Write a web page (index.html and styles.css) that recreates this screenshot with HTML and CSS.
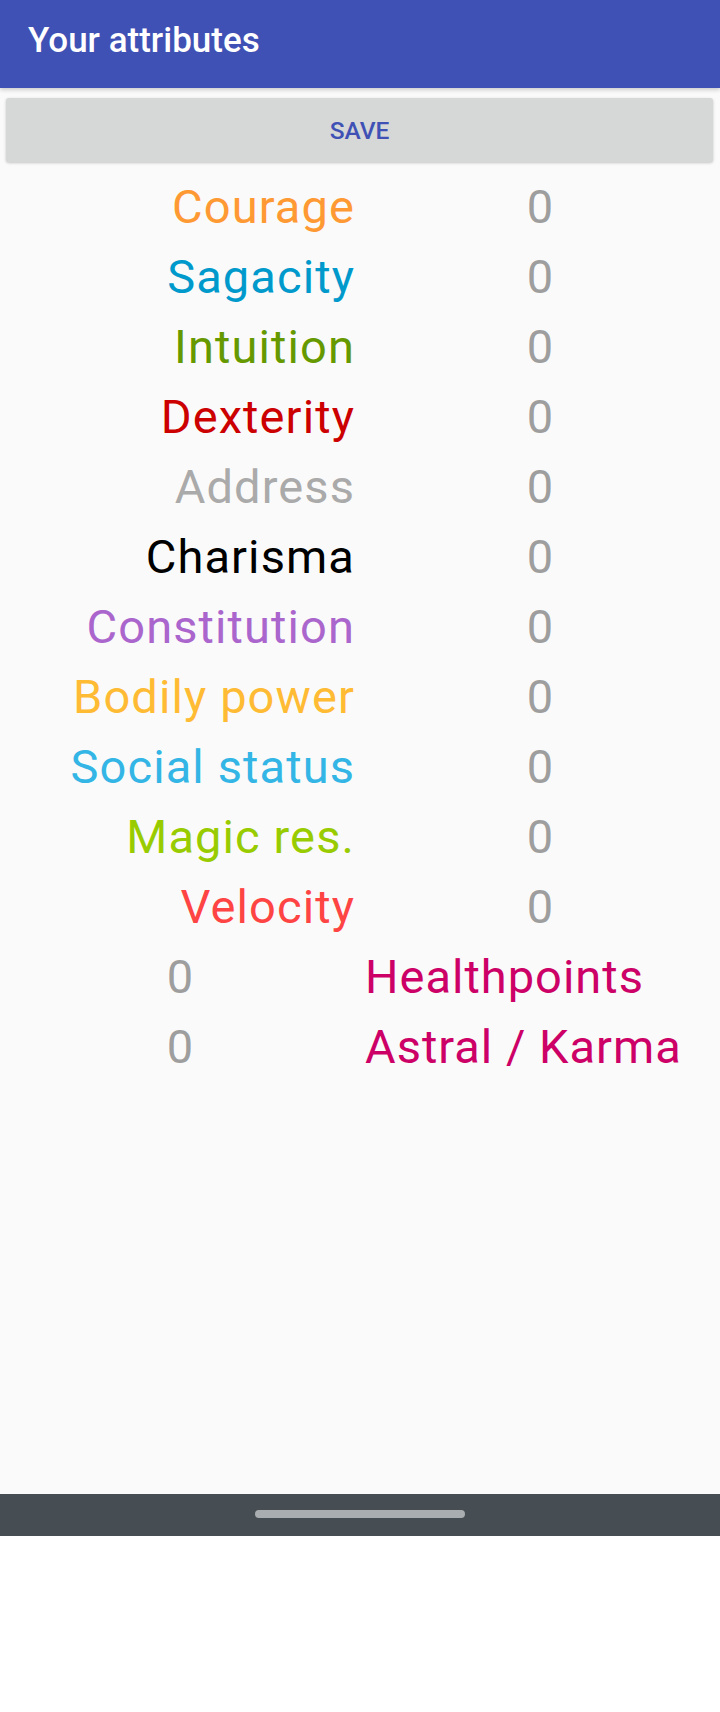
FILE: index.html
```html
<!DOCTYPE html>
<html>
<head>
<meta charset="utf-8">
<link rel="stylesheet" href="styles.css">
</head>
<body>
<div class="screen">
  <header class="appbar"><span class="title">Your attributes</span></header>
  <main class="content">
    <button class="save">SAVE</button>
    <div class="grid">
      <div class="label c-courage">Courage</div><div class="num">0</div>
      <div class="label c-sagacity">Sagacity</div><div class="num">0</div>
      <div class="label c-intuition">Intuition</div><div class="num">0</div>
      <div class="label c-dexterity">Dexterity</div><div class="num">0</div>
      <div class="label c-address">Address</div><div class="num">0</div>
      <div class="label c-charisma">Charisma</div><div class="num">0</div>
      <div class="label c-constitution">Constitution</div><div class="num">0</div>
      <div class="label c-bodily">Bodily power</div><div class="num">0</div>
      <div class="label c-social">Social status</div><div class="num">0</div>
      <div class="label c-magic">Magic res.</div><div class="num">0</div>
      <div class="label c-velocity">Velocity</div><div class="num">0</div>
      <div class="num">0</div><div class="label-r c-points">Healthpoints</div>
      <div class="num">0</div><div class="label-r c-points">Astral / Karma</div>
    </div>
  </main>
  <footer class="navbar"><span class="pill"></span></footer>
  <div class="below"></div>
</div>
</body>
</html>
```
FILE: styles.css
```css
html, body {
  margin: 0;
  padding: 0;
  background: #ffffff;
}
.screen {
  width: 720px;
  height: 1712px;
  display: flex;
  flex-direction: column;
  font-family: Roboto, "Liberation Sans", sans-serif;
}
.appbar {
  height: 88px;
  flex: none;
  background: #3f51b5;
  box-sizing: border-box;
  padding: 20px 0 0 28px;
  position: relative;
  z-index: 2;
  box-shadow: 0 2px 4px rgba(0,0,0,0.18);
}
.title {
  color: #ffffff;
  font-size: 35px;
  font-weight: 500;
  line-height: 41px;
  display: block;
}
.content {
  flex: 1;
  background: #fafafa;
  display: flex;
  flex-direction: column;
  padding-top: 10px;
}
.save {
  margin: 0 7px 0 6px;
  height: 64px;
  flex: none;
  border: none;
  border-radius: 3px;
  background: #d6d7d7;
  color: #3f51b5;
  font-family: Roboto, "Liberation Sans", sans-serif;
  font-size: 24.5px;
  font-weight: 500;
  box-shadow: 0 1px 3px rgba(0,0,0,0.22);
  padding: 0;
}
.grid {
  margin-top: 10px;
  display: grid;
  grid-template-columns: 360px 360px;
  grid-auto-rows: 70px;
  font-size: 47px;
  line-height: 70px;
}
.label {
  text-align: right;
  padding-right: 5px;
  letter-spacing: 1.1px;
}
.label-r {
  text-align: left;
  padding-left: 5px;
  letter-spacing: 1px;
}
.num {
  text-align: center;
  color: #9e9e9e;
}
.c-courage { color: #ff9933; }
.c-sagacity { color: #0099cc; }
.c-intuition { color: #669900; }
.c-dexterity { color: #cc0000; }
.c-address { color: #aaaaaa; }
.c-charisma { color: #000000; }
.c-constitution { color: #aa66cc; }
.c-bodily { color: #ffbb33; }
.c-social { color: #33b5e5; }
.c-magic { color: #99cc00; }
.c-velocity { color: #ff4444; }
.c-points { color: #cc0066; }
.navbar {
  height: 42px;
  flex: none;
  background: #464d53;
  display: flex;
  justify-content: center;
  padding-top: 16px;
  box-sizing: border-box;
}
.pill {
  width: 210px;
  height: 8px;
  border-radius: 4px;
  background: #a9adaf;
}
.below {
  height: 176px;
  flex: none;
  background: #ffffff;
}
```
